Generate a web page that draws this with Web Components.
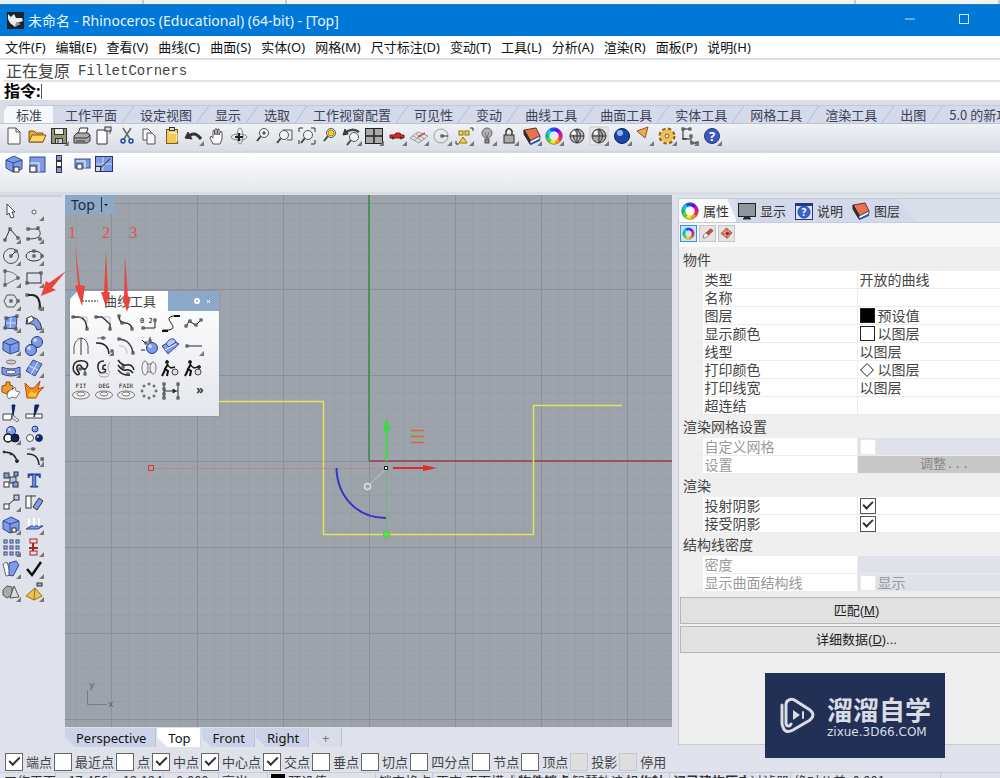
<!DOCTYPE html>
<html lang="zh-CN">
<head>
<meta charset="utf-8">
<title>未命名 - Rhinoceros</title>
<style>
  body {
    margin: 0;
    height: 100vh;
    overflow: hidden;
    font: 13px/18px "Noto Sans", "Noto Sans CJK SC", sans-serif;
    color: #222;
    background: #dfe2eb;
    --line: #c3c8d3;
    --blue: #0078d7;
  }
</style>
</head>
<body>
<app-window>
  <title-bar slot="top">未命名 - Rhinoceros (Educational) (64-bit) - [Top]</title-bar>
  <menu-bar slot="top"></menu-bar>
  <command-line slot="top">正在复原</command-line>
  <toolbar-tabs slot="top"></toolbar-tabs>
  <tool-strip slot="top" kind="main"></tool-strip>
  <tool-strip slot="top" kind="extra"></tool-strip>
  <side-tools slot="left"></side-tools>
  <view-port slot="center"><curve-palette></curve-palette></view-port>
  <view-tabs slot="center"></view-tabs>
  <property-panel slot="right"></property-panel>
  <snap-bar slot="bottom"></snap-bar>
  <status-bar slot="bottom"></status-bar>
</app-window>

<script>
// ----- Icon drawing, every icon is centred on 0,0 in a 22x22 box -----
const ln = (d, c = '#333', w = 1) => `<path d="${d}" fill="none" stroke="${c}" stroke-width="${w}"/>`;
const sh = (d, f, c = '#333', w = 1) => `<path d="${d}" fill="${f}" stroke="${c}" stroke-width="${w}" stroke-linejoin="round"/>`;
const ci = (x, y, r, f = 'none', c = '#333', w = 1) => `<circle cx="${x}" cy="${y}" r="${r}" fill="${f}" stroke="${c}" stroke-width="${w}"/>`;
const el = (x, y, rx, ry, f = 'none', c = '#333') => `<ellipse cx="${x}" cy="${y}" rx="${rx}" ry="${ry}" fill="${f}" stroke="${c}"/>`;
const re = (x, y, w, h, f = 'none', c = '#333') => `<rect x="${x}" y="${y}" width="${w}" height="${h}" fill="${f}" stroke="${c}"/>`;
const nodes = (...p) => p.map(([x, y]) => re(x - 1, y - 1, 2, 2, '#fff')).join('');
const BLUE = '#7f9be6';
const PALE = '#b9c9f3';
const NAVY = '#12235c';

const lens = (x, y) => ln(`M${x - 3} ${y + 3}L${x - 7} ${y + 8}`, '#444', 2) + ci(x, y, 4.5, '#f1f3f7', '#555');
const box = sh('M-8-4L0-8 8-4 8 5-1 8-8 4Z', BLUE, '#334a94') + ln('M-8-4L-1-1 8-4M-1-1V8', '#334a94');
const ball = (x, y, r, f = BLUE) => ci(x, y, r, f, '#223c86') + `<circle cx="${x - r / 3}" cy="${y - r / 3}" r="${r / 3}" fill="#fff" opacity=".6"/>`;
const wheel = (r, w) => ['#e33', '#f90', '#fe0', '#5d2', '#0c8', '#0cf', '#05f', '#60f', '#d0c']
  .map((c, i) => {
    const a = i * 40 * Math.PI / 180, b = (i + 1.1) * 40 * Math.PI / 180;
    const p = t => `${(r * Math.cos(t)).toFixed(1)} ${(r * Math.sin(t)).toFixed(1)}`;
    return ln(`M${p(a)}A${r} ${r} 0 0 1 ${p(b)}`, c, w);
  }).join('') + ci(0, 0, r + w / 2, 'none', '#556', .7);
const layers = sh('M-8-6L4-8 8 0-2 5Z', '#e8714e', '#603028') + sh('M-8-6V-2L-2 8V4Z', '#333', '#222') + sh('M-2 5L8 0V3L-2 8Z', '#fff', '#446') + ln('M-2 8.500L8 4', '#2b53c0', 1.500);
const disc = word => `<text x="0" y="-3" text-anchor="middle" font-family="DejaVu Sans Mono" font-size="6" fill="#111">${word}</text>`
  + el(0, 4, 8.500, 4, '#eee', '#777') + el(0, 3, 4, 2, '#fff', '#777');
const worker = ci(-4, -6, 1.500, '#111') + ln('M-3-4L-6 1-3 3-4 8M-6 1L-7 4-9 8', '#111', 2) + ln('M-4-3L0 0 4-1', '#111', 1.500) + ci(4, 4, 3, '#ddd', '#444');

const ICONS = {
  page: sh('M-6-8H2L6-4V8H-6Z', '#fafafa', '#555') + ln('M2-8V-4H6', '#555'),
  open: sh('M-8 6V-5H-3L-1-3H6V6Z', '#e6a93a', '#80580f') + sh('M-8 6L-5-1H9L6 6Z', '#ffd56b', '#80580f'),
  save: re(-7.500, -7.500, 15, 15, '#96946a') + re(-4.500, -7.500, 9, 6, '#eee') + re(-3.500, 2.500, 7, 5, '#ccc') + ln('M-1 3V7'),
  print: sh('M-4-2L-2-8H6L4-2Z', '#fff') + sh('M-8 0L-5-3H6L8-1V5L5 7H-8Z', '#aaa') + ln('M-8 2H5L8-1M-6 5H3'),
  note: sh('M-7-6H3V8H-7Z', '#fff') + re(1, -9, 6, 4, '#ddd') + ln('M6-6V-2', '#555'),
  cut: ln('M-4-8L3 3M4-8L-3 3', '#666', 1.500) + ci(-4, 5, 2, 'none', '#24479b', 1.500) + ci(4, 5, 2, 'none', '#24479b', 1.500),
  copy: sh('M-6-7H-1L2-4V4H-6Z', '#fff', '#555') + sh('M-2-3H3L6 0V8H-2Z', '#f4f4f4', '#555'),
  paste: re(-5.500, -6.500, 11, 14, '#f3ca58', '#7b5a14') + re(-2.500, -8.500, 5, 3, '#ddd') + ln('M-3-3H5V5', '#fff'),
  undo: ln('M-6 1Q0-6 7 3', '#333', 3) + sh('M-9 2L-6-4-2 3Z', '#333'),
  hand: sh('M-4 8L-7 2-6 0-4 2V-5L-3-6-2-1V-7H0V-1L1-7H2V-1L4-5 5-4V3L3 8Z', '#fff', '#555'),
  rotate: el(0, 1, 8, 3, 'none', '#888') + el(1, 0, 3, 8, 'none', '#888') + ln('M-4 1H4M0-3V5', '#222', 2),
  zoomin: lens(2, -3) + ln('M0-3H4M2-5V-1'),
  zoomwin: ln('M-1-6H8V4H3', '#555') + lens(0, -1),
  zoomext: ln('M-8-4V-8H-4M4-8H8V-4M8 4V8H4M-8 4V8', '#333') + lens(1, -1),
  zoomsel: lens(2, -3) + ci(2, -3, 3, '#f4d42a', '#a88c00'),
  zoomback: ln('M-7-3Q0-9 7-4', '#444', 2.500) + sh('M-9-1L-7-7-4-2Z', '#444') + lens(2, 1),
  panes: re(-8.500, -7.500, 17, 15, '#aaa', '#222') + ln('M0-7V7M-8 0H8', '#222', 1.500),
  car: sh('M-7 2V-1L-3-1-1-3H3L4-1H7V2Z', '#d12a20', '#8d1914') + ci(-4, 2, 1, '#333') + ci(4, 2, 1, '#333'),
  mesh: ln('M-9 2L-1-4 9 0 0 7ZM-6 0L3 5M-3-2L6 3M-4 4L4-2', '#999') + ln('M-1 1L6-3', '#c55', 1.500),
  radius: ci(-1, 0, 7, 'none', '#999') + ln('M-1 0H6', '#333') + nodes([0, 0]),
  select: re(-5, -5, 4, 4, '#f5d64a', '#927400') + re(1, -5, 4, 4, '#f5d64a', '#927400') + sh('M-1 1L3 7H-5Z', '#f5d64a', '#927400') + ln('M6-8H9V-5M-8 5V8H-5'),
  bulb: ci(0, -3, 5, '#b3b3b3', '#666') + re(-2, 3, 4, 4, '#888', '#555') + ln('M-2-4L0 2 2-4', '#777'),
  lock: ln('M-3-1V-5Q0-10 3-5V-1', '#333', 1.500) + re(-5, -1, 10, 8, '#aaa'),
  layers,
  wheel: wheel(6.500, 3.500),
  globe: ci(0, 0, 7, '#bbb') + ln('M0-7V7M-7 0H7M0-7Q7 0 0 7M0-7Q-7 0 0 7') + ci(-3, -3, 2, '#fff', 'none'),
  globe2: re(-9, -9, 18, 18, '#e8e8e8', '#ccc') + ci(0, 0, 7, '#aaa') + ln('M0-7V7M-7 0H7M0-7Q7 0 0 7') + ci(-3, -3, 2, '#fff', 'none'),
  blueball: ci(0, 0, 7.500, '#1746ad', '#0c2158') + ci(-2, -3, 3, '#91b6fa', 'none'),
  cone: sh('M-7-5L4-9 1 2Z', '#efac46', '#80562a'),
  gear: `<circle r="6.500" fill="none" stroke="#916217" stroke-width="4" stroke-dasharray="3 2.100"/>` + ci(0, 0, 4.500, 'none', '#f3bf4d', 4) + ci(0, 0, 2, '#eee', '#815510'),
  dims: ln('M-7-7H1M-6-6V3H1M2 0V7H8M-7 3H-2', '#222') + nodes([-6, -7], [1, -7], [2, 0], [3, 7], [8, 7]),
  help: ci(0, 0, 7.500, '#3b59c1', '#26367f') + `<text y="5" text-anchor="middle" font-family="Noto Sans" font-size="13" font-weight="700" fill="#fff">?</text>`,

  cube: box + re(0, 3, 5, 5, '#fff'),
  resize: re(-7, -7, 15, 15, BLUE, '#334a94') + re(-7, 2, 6, 6, '#fff') + ln('M-7-1H2V8', '#fff'),
  stack: re(-2.500, -8.500, 5, 5, BLUE) + re(-2.500, -2.500, 5, 5, '#fff') + re(-2.500, 3.500, 5, 5, BLUE),
  wide: re(-7, -5, 15, 9, BLUE, '#334a94') + re(-5, 0, 5, 5, '#fff') + ln('M-6-3H3V4', '#fff'),
  scale: re(-8.500, -7.500, 17, 15, BLUE, '#22357a') + ln('M-8 0H8M-1-7V7', '#c7d3f8') + ln('M-6 6L6-5', '#222') + re(-8.500, 2.500, 5, 5, '#cfdafb'),

  arrow: sh('M-4-7L4 1H1L3 6 0 7-2 2-4 4Z', '#fff', '#444'),
  point: ci(0, 1, 2, '#fff', '#555'),
  polyline: ln('M-6 6L-1-5 7 4') + nodes([-6, 6], [-1, -5], [7, 4]),
  freecurve: ln('M-6-5H2Q7-5 6 1 5 5-6 5', '#444') + nodes([-6, -5], [4, -6], [6, 5], [-6, 5]),
  circle: ci(0, 0, 7.500, 'none', '#555') + ln('M0 0L5-5') + nodes([0, 0], [5, -5]),
  ellipse: el(0, 0, 8, 5) + nodes([0, 0], [0, -5], [8, 0]),
  arc: ln('M-6-7Q5-6 7 0L-6 7Z', '#777') + nodes([-6, -7], [7, 0], [-6, 7]),
  rect: re(-7, -5, 14, 10) + nodes([-7, 5], [7, -5]),
  hexagon: ln('M-7 0L-4-6H3L7 0 3 6H-4Z', '#555') + nodes([0, 0], [7, 0]),
  fillet: ln('M-7-6H-2Q6-6 6 7', '#222', 2) + nodes([-7, -6], [6, 7]),
  surface: sh('M-5-5L6-7 5 6-6 5Z', BLUE, '#334a94') + ln('M0-6L-1 5M-5 0H5', '#d6e0fc') + nodes([-5, -5], [6, -7], [5, 6], [-6, 5]),
  sweep: sh('M-7-5Q5-9 8 6L3 7Q1-1-8 1Z', BLUE, '#334') + sh('M-7-5L-2-7 0-3-6 1Z', '#fff', '#444'),
  solid: box,
  spheres: ball(3, -4, 5.500) + ball(-3, 4, 5.500),
  tube: el(0, -6, 5, 2, '#ccc', '#777') + sh('M-9-1Q0 3 9-1V6Q0 10-9 6Z', BLUE, '#334a94') + el(0, 4, 5, 2, '#eef', '#556'),
  plane: sh('M-8 3L-1-8 8-4 1 8Z', BLUE, '#334a94') + ln('M-5-2L4 2M4-6L-3 6', '#dbe4ff'),
  puzzle: sh('M-9-4L-5-5-5-8-1-8-1-5 2-4 1 1-3 1-4 4-9 2Z', '#f39d27', '#855510') + sh('M-3 2L1-1 1 0 4-3 5 1 9 2 5 8 1 7-2 9-4 6Z', '#fff', '#777'),
  burst: sh('M-9-7L-4-2 0-2 6-9 4-1 10-3 5 2 2 8H-7Z', '#f58a20', '#b64d0d') + sh('M-6 4L-2 0 0 3 4 1 2 7H-6Z', '#f8cd36', '#e09120'),
  trim: sh('M-8 1H1L0 7H-8Z', '#fff', '#444') + sh('M1-8H4L2 3Z', NAVY, NAVY) + sh('M2 2L8 7 6 9 1 5Z', '#ddd', '#777'),
  split: re(-8, 1, 16, 4, '#fff', '#444') + sh('M1-8H5L0 4Z', NAVY, NAVY),
  union: ball(0, -4, 4.500) + ci(-3, 3, 4, '#fff', '#111', 1.500) + ci(4, 3, 4, NAVY, '#111'),
  spots: ball(1, -6, 3) + ci(-4, 3, 3.500, '#fff', '#555') + ball(5, 3, 3.500, NAVY),
  join: ln('M-7-5Q5-5 6 6', '#222', 1.500) + ci(-7, -5, 1, '#222') + ci(0, -3, 1, '#222') + ci(6, 4, 1.500, '#222'),
  match: ln('M-7-3Q4-4 5 8', '#222', 1.500) + ln('M-7-8H2M9 0V7', '#888') + nodes([-1, -8], [8, 2]),
  blocks: re(-7, -7, 5, 5, BLUE) + re(-1, -3, 6, 6, PALE) + re(-7, 2, 5, 5, '#fff') + re(2, 2, 5, 5, BLUE) + re(3, -8, 4, 4, BLUE),
  text: `<text y="7" text-anchor="middle" font-family="Liberation Serif" font-size="19" font-weight="700" fill="#7796e2" stroke="#24479b">T</text>`,
  move: re(-7, 2, 5, 5, '#fff') + re(3, -7, 5, 5, PALE) + ln('M-2 2L3-2'),
  turn: re(-8, -6, 5, 12, '#fff') + sh('M-1 5L5-4 9-1 3 8Z', BLUE) + ln('M-3-6L2-6'),
  corner: box + re(1, 3, 4, 4, '#fff'),
  project: sh('M-8 4H4L9 1H-3Z', BLUE, '#334a94') + ln('M-5 1V-6M0 1V-7M5 1V-6', '#fff', 2),
  array: [-7, -1, 5].map(y => [-7, -1, 5].map(x => re(x, y, 3, 3, y ? PALE : '#fff', '#33457c')).join('')).join(''),
  weld: re(-4, -8, 7, 4, 'none', '#a22') + re(-4, 4, 7, 4, 'none', '#a22') + ln('M-1-4V4M-5 1H4', '#a22', 2),
  solids: sh('M-8-5L-4-7 0 6-5 7Z', '#fff', '#667') + sh('M-2-6L5-8 8-4 2 7-2 6Z', BLUE, '#334a94'),
  check: ln('M-7 0L-2 6 7-7', '#111', 2.500),
  group: sh('M-8-2L-4-6 1-5 1 3-4 6-8 3Z', '#aaa', '#555') + sh('M3-6L8 5-1 6Z', '#ddd', '#555'),
  pyramid: sh('M1-4L8 4 0 8-8 4Z', '#ecc44f', '#947018') + ln('M1-4L0 8', '#947018') + re(3, -9, 5, 3, '#aaa'),

  cornerfillet: ln('M-8-6H-3Q5-6 6 6', '#333', 1.500) + ln('M-2-6H6V0', '#bbb') + nodes([-8, -6], [6, 6]),
  chamfer: ln('M-8-6H-2L6 1V6', '#333', 1.500) + ln('M0-6H6V0', '#bbb') + nodes([-8, -6], [6, 6]),
  blend: ln('M-7-7Q-7 0-1 0T6 6', '#333', 1.500) + nodes([-7, -7], [6, 6], [-4, 0]),
  adjust: ln('M-7 5H6V-3', '#222') + nodes([-6, 5], [6, -3]) + `<text x="-9" y="0" font-size="7" font-family="DejaVu Sans Mono">0  2</text>`,
  snake: ln('M8-7H2Q-5-6 0 0T-2 7H-8', '#222') + ln('M3-7H9M-9 8H-3', '#111', 2),
  zigzag: ln('M-8 4L-5-2-2 0 2 2 7-3', '#222') + nodes([-8, 3], [-4, -2], [2, 2], [7, -3]),
  arch: ln('M-7 8V0Q-5-7 0-8 6-7 7 0V8', '#555') + ln('M0-8V9'),
  offset: ln('M-8-3Q4-4 5 8', '#222', 1.500) + ln('M-7-8H2', '#777') + nodes([-1, -8], [8, 5]),
  shell: ln('M-7-7Q5-6 7 7', '#444', 1.500) + ln('M-7 0Q1-1 1 8', '#bbb') + nodes([-7, -7], [7, 7]),
  orbit: ball(3, 2, 5.500) + ln('M-7-6L-4-3M1-9V-5M-8 4H-4', '#222') + nodes([-3, -3], [1, -5]),
  curl: sh('M-9 0L1-6 8-2-3 8Z', BLUE, '#334a94') + sh('M-5-2Q-2-8 3-7L5-4-2 1Z', PALE, '#334a94') + ln('M-6 4L5-2', '#fff'),
  dashline: ln('M-7 0H8', '#222') + nodes([-7, 0]),
  loop: ln('M-3 7C-10 4-9-6-2-7S8-5 6-1 1 0 0-2-5-3-4 1 0 5-3 7', '#222', 1.500) + ln('M0 1H4V5', '#222') + nodes([-1, 1], [4, 6]),
  spiral: ln('M0-7Q-7-7-6 0T1 4Q3 1-1 1-2-3 2-3', '#222', 1.500) + ln('M6-6Q2 0 6 5', '#aaa') + el(0, 7, 5, 2, 'none', '#aaa'),
  flow: ln('M-8-8Q-4-2 1-3T8 2M-8-3Q-4 3 0 2T7 5M-8 2Q-3 8 4 7', '#222', 1.500) + nodes([-3, -1], [2, 6]),
  rings: el(-4, 0, 3, 7, 'none', '#777') + el(4, 0, 3, 6, 'none', '#777') + ln('M-1-4H3M-1 4H3', '#777'),
  worker, worker2: worker + ci(5, -1, 1.500, '#222'),
  fit: disc('FIT'), deg: disc('DEG'), fair: disc('FAIR'),
  ring: [[0, -7], [5, -5], [7, 0], [5, 5], [0, 7], [-5, 5], [-7, 0], [-5, -5]].map(([x, y]) => ci(x, y, 1, '#fff', '#444')).join(''),
  connect: ln('M-7-7V7M7-7V7M-7 0H7', '#333') + sh('M2-2L5 0 2 2Z', '#222') + nodes([-7, -7], [-7, -2], [-7, 3], [-7, 7], [7, -7], [7, 7]),
  next: `<text x="6" y="3" text-anchor="middle" font-family="Noto Sans" font-size="12" font-weight="700" fill="#333">»</text>`,

  monitor: re(-8.500, -7.500, 17, 13, '#8e989c', '#222') + sh('M-2 6H2L4 8H-4Z', '#222'),
  helpbox: re(-8.500, -7.500, 17, 16, '#d8e3f8', '#26387d') + ln('M-8-6H8', '#26387d', 2) + ci(0, 1, 6, '#3b61cd', '#29499f')
    + `<text y="5" text-anchor="middle" font-family="Noto Sans" font-size="10" font-weight="700" fill="#fff">?</text>`,
  brush: sh('M-6 7Q-7 1-2-1L2 2Q-1 7-6 7Z', '#f5f5f5', '#555') + sh('M-2-1L5-7 8-4 2 2Z', '#d6492b', '#733'),
  material: sh('M0-8L8-1 1 7-8 0Z', '#df715b', '#7c2e23') + ln('M-5-3L4 4M4-5L-3 3M-1-5V4', '#f6d7ce') + ci(1, 0, 2, '#822', '#822')
};

// ----- Base class: clones the shared template of its subclass -----
class Piece extends HTMLElement {
  constructor() {
    super();
    this.attachShadow({ mode: 'open' });
  }
  connectedCallback() {
    const template = document.createElement('template');
    template.innerHTML = `<style>:host { display: block; box-sizing: border-box; }</style>` + this.render();
    this.shadowRoot.replaceChildren(template.content.cloneNode(true));
  }
}

const define = (name, render) => customElements.define(name, class extends Piece {
  render() { return render(this); }
});

// "name+" marks an icon that has a fly-out
const icons = list => list.split(' ').map(n => `<tool-icon name="${n.replace('+', '')}"${n.endsWith('+') ? ' more' : ''}></tool-icon>`).join('');

define('tool-icon', host => `
<style>
  :host { width: 22px; height: 22px; }
  button { display: block; width: 100%; height: 100%; padding: 0; border: 0; background: none; }
  svg { display: block; width: 100%; height: 100%; overflow: visible; }
</style>
<button type="button" aria-label="${host.getAttribute('name')}">
  <svg viewBox="-11 -11 22 22">${ICONS[host.getAttribute('name')]}
    ${host.hasAttribute('more') ? '<path d="M10 5V10H5Z" fill="#777"/>' : ''}</svg>
</button>`);

define('app-window', () => `
<style>
  :host { display: flex; flex-direction: column; height: 100%; overflow: hidden; }
  .behind { flex: none; display: flex; height: 4px; background: linear-gradient(90deg, #e8efef, #f4f6f5 40%, #f0f4f5); }
  .behind i { flex: 1; border-right: 2px solid #c5cccf; }
  .main { flex: 1; min-height: 0; display: grid; grid-template-columns: 65px 1fr 322px; column-gap: 0; position: relative; }
  .center { display: flex; flex-direction: column; min-height: 0; margin-right: 6px; padding-bottom: 4px; }
  .right { display: flex; flex-direction: column; padding: 3px 0 6px; }
  .marks { position: absolute; left: 0; top: 0; width: 300px; height: 160px; pointer-events: none; }
</style>
<div class="behind"><i></i><i></i><i style="flex: 4"></i><i></i></div>
<slot name="top"></slot>
<div class="main">
  <slot name="left"></slot>
  <div class="center"><slot name="center"></slot></div>
  <div class="right"><slot name="right"></slot></div>
  <svg class="marks" viewBox="0 0 300 160" fill="#e8453f">
    <path d="M75 48L80 90 85 91 82 111 75 91 78 90Z"/>
    <path d="M106 56L108 97 110 97 106 112 101 97 104 97Z"/>
    <path d="M125 61L128 102 131 102 127 117 122 102 124 101Z"/>
    <path d="M66 76L52 93 56 95 41 101 46 86 49 88Z"/>
    <g font-family="Liberation Serif" font-size="17" fill="#e8505a">
      <text x="68" y="43">1</text><text x="102" y="43">2</text><text x="129" y="43">3</text>
    </g>
  </svg>
</div>
<slot name="bottom"></slot>
<water-mark></water-mark>`);

define('title-bar', () => `
<style>
  :host { display: flex; align-items: center; flex: none; height: 32px; gap: 4px; padding-left: 7px; color: #e8f4ff; background: var(--blue); font-size: 14px; border-top: 1px solid #2a7ab8; }
  .name { flex: 1; }
  button { width: 50px; height: 31px; border: 0; padding: 0; background: none; }
</style>
<svg width="17" height="17" viewBox="0 0 17 17"><rect width="17" height="17" fill="#1c2227"/><path d="M1 2L4 5 7 2 9 6 15 6 16 9 10 11 8 15 3 11 1 7Z" fill="#e8eef0"/><path d="M9 10L14 12 8 15Z" fill="#8b969c"/></svg>
<span class="name"><slot></slot></span>
<button aria-label="min"><svg width="12" height="12"><path d="M1 6H11" stroke="#b9e0ff"/></svg></button>
<button aria-label="max"><svg width="12" height="12"><rect x="1.500" y="1.500" width="9" height="9" fill="none" stroke="#cfeaff"/></svg></button>
<span style="width: 7px"></span>`);

define('menu-bar', () => `
<style>
  :host { flex: none; height: 22px; background: #fff; }
  nav { display: flex; gap: 10px; padding: 2px 5px 0; white-space: nowrap; }
  a { color: #111; text-decoration: none; }
</style>
<nav>${'文件(F) 编辑(E) 查看(V) 曲线(C) 曲面(S) 实体(O) 网格(M) 尺寸标注(D) 变动(T) 工具(L) 分析(A) 渲染(R) 面板(P) 说明(H)'
    .split(' ').map(t => `<a href="#">${t}</a>`).join('')}</nav>`);

define('command-line', () => `
<style>
  :host { flex: none; padding: 1px 0 0 4px; border-top: 2px solid #dcdfe6; background: #fff; font-size: 16px; color: #444; }
  .past { display: flex; align-items: center; gap: 8px; height: 19px; padding-left: 2px; border-bottom: 2px solid #e2e2e6; }
  .past code { font: 14px "Liberation Mono", monospace; }
  label { display: flex; align-items: center; height: 18px; line-height: 16px; font-weight: 700; font-size: 16px; color: #000; }
  i { width: 1px; height: 15px; background: #555; }
  input { flex: 1; min-width: 0; height: 16px; padding: 0; border: 0; outline: 0; background: none; font: inherit; }
</style>
<div class="past"><slot></slot><code>FilletCorners</code></div>
<label>指令:<i></i><input type="text"></label>`);

define('toolbar-tabs', () => `
<style>
  :host { flex: none; height: 24px; padding: 5px 0 0 4px; overflow: hidden; border-bottom: 1px solid #bcc3d3; background: #dadde6; }
  div { display: flex; height: 19px; background: #d5daea; white-space: nowrap; color: #3c4152; }
  button { flex: none; position: relative; height: 19px; padding: 0 11px 0 12px; border: 0; border-top: 1px solid #c3c8d8; background: none; color: inherit; font: 13px/16px "Noto Sans CJK SC", sans-serif; }
  button::after { content: ""; position: absolute; right: 0; top: 0; width: 1px; height: 18px; background: #b6bdcf; transform: skewX(-35deg); }
  .on { background: #f7f8fb; clip-path: polygon(4px 0, 100% 0, 100% 100%, 0 100%, 0 6px); }
  .on::after { display: none; }
</style>
<div>${'标准 工作平面 设定视图 显示 选取 工作视窗配置 可见性 变动 曲线工具 曲面工具 实体工具 网格工具 渲染工具 出图 5.0_的新功能'
    .split(' ').map((t, i) => `<button class="${i ? '' : 'on'}">${t.replace('_', ' ')}</button>`).join('')}</div>`);

const STRIPS = {
  main: 'page open save+ print note cut copy paste undo+ hand rotate zoomin zoomwin zoomext zoomsel zoomback+ panes+ car+ mesh+ radius+ select+ bulb+ lock+ layers+ wheel+ globe globe2+ blueball+ cone+ gear+ dims+ help+',
  extra: 'cube resize stack wide scale'
};

define('tool-strip', host => `
<style>
  :host { flex: none; padding: 1px 3px 0; height: 29px; background: linear-gradient(#f1f2f6, #d9dde5); border-bottom: 2px solid #d2d6de; }
  :host([kind="extra"]) { height: 42px; padding-top: 0; background: linear-gradient(#fff, #e3e6ec); border-bottom: 3px solid #d8dce4; }
  div { display: grid; grid-template-columns: repeat(32, 1fr); width: 720px; justify-items: center; }
</style>
<div>${icons(STRIPS[host.getAttribute('kind')])}</div>`);

define('side-tools', () => `
<style>
  :host { border-top: 2px solid #cdd2dc; margin-right: 3px; padding-top: 3px; }
  div { display: grid; grid-template-columns: 23px 23px; grid-auto-rows: 1fr; height: 403px; align-items: center; }
</style>
<div>${icons('arrow point+ polyline+ freecurve+ circle+ ellipse+ arc+ rect+ hexagon+ fillet+ surface+ sweep+ solid+ spheres+ tube+ plane+ puzzle burst trim split union+ spots join match+ blocks text move+ turn corner+ project+ array+ weld+ solids+ check+ group+ pyramid+')}</div>`);

define('view-port', () => `
<style>
  :host { position: relative; flex: 1; min-height: 0; overflow: hidden; background: #9da3ab; }
  .scene { position: absolute; inset: 0; width: 100%; height: 100%; }
  .label { position: absolute; left: 0; top: 0; display: flex; align-items: center; height: 19px; padding-left: 6px; gap: 6px; border: 0; background: #8ea9c8; color: #1d2a3d; font: 14px/19px "Noto Sans", sans-serif; }
  .label i { width: 1px; height: 15px; background: #234; }
  .label b { width: 0; border: 2px solid transparent; border-top-color: #111; margin: 2px 1px 0 -4px; }
  slot { display: block; position: absolute; left: 5px; top: 96px; }
</style>
<svg class="scene">
  <defs>
    <pattern id="grid" x="46" y="8" width="86" height="86" patternUnits="userSpaceOnUse">
      <path d="M17.500 0V86M34.500 0V86M51.500 0V86M68.500 0V86M0 17.500H86M0 34.500H86M0 51.500H86M0 68.500H86" stroke="#989ea6"/>
      <path d="M.500 0V86M0 .500H86" stroke="#8a9099"/>
    </pattern>
  </defs>
  <rect width="100%" height="100%" fill="url(#grid)"/>
  <path d="M304 266H2000" stroke="#9c3c48" stroke-width="1.500"/>
  <path d="M304 0V266" stroke="#2f8f40" stroke-width="1.500"/>
  <path d="M154 206.500H258.500V339.500H468.500V210.500H557" fill="none" stroke="#e2e25c" stroke-width="1.500"/>
  <path d="M87 273.500H320" stroke="#c77d7d" stroke-dasharray="2 1"/>
  <path d="M321.500 274V340" stroke="#69bf69" stroke-dasharray="2 1"/>
  <path d="M305 289L320 275" stroke="#c4c8cc"/>
  <rect x="83.500" y="270.500" width="5" height="5" fill="none" stroke="#e33232"/>
  <path d="M271.500 273C272 300 291 323 321 323" fill="none" stroke="#3434c6" stroke-width="2"/>
  <path d="M328 273H361" stroke="#e02a2a" stroke-width="2"/>
  <path d="M358 270L372 273 358 276Z" fill="#e02a2a"/>
  <path d="M321.500 266V235" stroke="#35e035" stroke-width="2"/>
  <path d="M318 236L321.500 223 325 236Z" fill="#35e035"/>
  <path d="M346 235.500H359M346 241.500H359M346 247.500H359" stroke="#e0604f" stroke-width="1.500"/>
  <path d="M345 238.500H358M345 244.500H358" stroke="#7dc06c"/>
  <rect x="319.500" y="271.500" width="3" height="3" fill="#fff" stroke="#222"/>
  <circle cx="302.500" cy="291.500" r="3" fill="none" stroke="#dde0e3" stroke-width="1.500"/>
  <circle cx="321.500" cy="339.500" r="3" fill="#59e63f" stroke="#39d139"/>
  <path d="M22.500 495V509.500H42" fill="none" stroke="#767c85"/>
  <g font-family="Liberation Mono" font-size="9" fill="#555b63"><text x="24" y="493">y</text><text x="43" y="512">x</text></g>
</svg>
<button class="label">Top<i></i><b></b></button>
<slot></slot>`);

define('curve-palette', () => `
<style>
  :host { width: 149px; background: linear-gradient(#fff, #e3e6ec); box-shadow: 0 0 1px #667; }
  header { display: flex; height: 20px; background: #8ca8c8; color: #444; }
  h2 { display: flex; align-items: center; gap: 6px; width: 98px; box-sizing: border-box; margin: 0; padding-left: 12px; background: #fff; clip-path: polygon(8px 0, 100% 0, 100% 100%, 0 100%, 0 8px); font: 13px/20px "Noto Sans CJK SC", sans-serif; }
  span { flex: 1; display: flex; align-items: center; justify-content: flex-end; gap: 6px; padding-right: 8px; }
  div { display: grid; grid-template-columns: repeat(6, 1fr); grid-auto-rows: 1fr; height: 90px; padding: 1px 14px 14px 0; width: 135px; }
</style>
<header>
  <h2><svg width="16" height="4"><path d="M0 2H16" stroke="#222" stroke-dasharray="2 1"/></svg>曲线工具</h2>
  <span>
    <svg width="6" height="6"><circle cx="3" cy="3" r="2" fill="none" stroke="#fff" stroke-width="2"/></svg>
    <svg width="5" height="5"><path d="M1 1L4 4M4 1L1 4" stroke="#fff"/></svg>
  </span>
</header>
<div>${icons('cornerfillet chamfer blend adjust snake zigzag arch offset+ shell orbit curl dashline+ loop spiral flow rings worker worker2 fit deg fair ring connect next')}</div>`);

define('view-tabs', () => `
<style>
  :host { display: flex; flex: none; height: 20px; padding-top: 1px; gap: 1px; }
  button { height: 19px; padding: 0 9px 0 11px; border: 0; border-right: 1px solid #bac2da; background: #ccd3e8; color: #111; clip-path: polygon(0 0, 100% 0, 100% 100%, 10px 100%, 0 10px); font: 13px/18px "Noto Sans", sans-serif; }
  .on { background: #fff; }
  .add { width: 32px; background: #d9ddea; color: #777; padding: 0; }
</style>
<button>Perspective</button><button class="on">Top</button><button>Front</button><button>Right</button><button class="add">+</button>`);

const row = (label, value = '', cls = '') => `<tr class="${cls}"><td class="gut"></td><th>${label}</th><td>${value}</td></tr>`;
const head = text => `<tr class="head"><th colspan="3">${text}</th></tr>`;

define('property-panel', () => `
<style>
  :host { flex: 1; display: flex; flex-direction: column; background: #efefef; border: 1px solid #c5cad3; border-right: 0; color: #444; font-family: "Noto Sans CJK SC", sans-serif; }
  .tabs { display: flex; height: 23px; background: #d9deeb; border-bottom: 1px solid #c6ccdb; }
  .tabs button { display: flex; align-items: center; gap: 2px; width: 57px; padding: 0; border: 0; background: #d3d9ea; color: #333; font: 13px/20px "Noto Sans CJK SC", sans-serif; white-space: nowrap; }
  .tabs .on { background: #fafafb; clip-path: polygon(0 0, 48px 0, 57px 20px, 57px 100%, 0 100%); }
  .tabs button:last-child { width: 66px; clip-path: polygon(0 0, 48px 0, 100% 100%, 0 100%); }
  .tools { display: flex; gap: 2px; padding: 2px 1px 3px; height: 19px; background: #f8f8f8; border-bottom: 1px solid #eee; }
  .tools tool-icon { width: 17px; height: 17px; border: 1px solid #c6c6c6; background: #e4e4e4; }
  .tools tool-icon:first-child { border-color: #3c94d8; background: #cbe4f6; }
  table { width: 100%; border-collapse: collapse; table-layout: fixed; margin-left: 1px; font-size: 14px; line-height: 17px; }
  td, th { height: 17px; padding: 0 2px; border: 0; border-bottom: 1px solid #ececec; border-right: 1px solid #ececec; background: #fff; text-align: left; font-weight: 400; white-space: nowrap; }
  td.gut { background: #efefef; }
  .head th { height: 22px; padding: 0 3px; background: #efefef; border-color: #efefef; }
  .off th { color: #999; }
  .off td:last-child { background: #dfe2ea; color: #999; }
  label, .val { display: flex; align-items: center; gap: 3px; height: 17px; }
  .sw { width: 13px; height: 13px; border: 1px solid #222; box-sizing: content-box; }
  .dia { width: 8px; height: 8px; margin: 0 3px 0 2px; border: 1px solid #555; transform: rotate(45deg); }
  input { appearance: none; flex: none; box-sizing: border-box; width: 16px; height: 16px; margin: 0 -1px 0 0; border: 1px solid #555; background: #fff; display: grid; place-items: center; }
  input:disabled { border-color: #e6e8ec; }
  input:checked::after { content: ""; width: 8px; height: 4px; margin-bottom: 3px; border: solid #333; border-width: 0 0 2px 2px; transform: rotate(-45deg); }
  .off .adj { padding: 0; }
  .adj button { display: block; width: 100%; height: 17px; padding: 0 0 0 32px; border: 0; background: #c8c8c8; color: #888; font: 13px/17px "Liberation Mono", "Noto Sans CJK SC", monospace; }
  .wide { flex: none; height: 27px; margin: 0 0 2px 1px; padding: 0 0 0 32px; border: 1px solid #b5b5b5; border-right: 0; background: #e1e1e1; color: #222; font: 13px/24px "Liberation Sans", "Noto Sans CJK SC", sans-serif; }
  .first { margin-top: 5px; }
  footer { flex: none; height: 5px; margin: 19px auto 0; width: 14px; border-radius: 8px 8px 0 0; background: #e4e4e4; }
</style>
<div class="tabs">
  <button class="on"><tool-icon name="wheel"></tool-icon>属性</button>
  <button><tool-icon name="monitor"></tool-icon>显示</button>
  <button><tool-icon name="helpbox"></tool-icon>说明</button>
  <button><tool-icon name="layers"></tool-icon>图层</button>
</div>
<div class="tools"><tool-icon name="wheel"></tool-icon><tool-icon name="brush"></tool-icon><tool-icon name="material"></tool-icon></div>
<table>
  <colgroup><col style="width: 22px"><col style="width: 155px"><col></colgroup>
  ${head('物件')}
  ${row('类型', '开放的曲线')}
  ${row('名称')}
  ${row('图层', '<div class="val"><span class="sw" style="background: #000"></span>预设值</div>')}
  ${row('显示颜色', '<div class="val"><span class="sw"></span>以图层</div>')}
  ${row('线型', '以图层')}
  ${row('打印颜色', '<div class="val"><span class="dia"></span>以图层</div>')}
  ${row('打印线宽', '以图层')}
  ${row('超连结')}
  ${head('渲染网格设置')}
  ${row('自定义网格', '<label><input type="checkbox" aria-label="custom mesh" disabled></label>', 'off')}
  <tr class="off"><td class="gut"></td><th>设置</th><td class="adj"><button disabled>调整...</button></td></tr>
  ${head('渲染')}
  ${row('<label for="cast">投射阴影</label>', '<input id="cast" type="checkbox" checked>')}
  ${row('<label for="recv">接受阴影</label>', '<input id="recv" type="checkbox" checked>')}
  ${head('结构线密度')}
  ${row('密度', '', 'off')}
  ${row('显示曲面结构线', '<label><input type="checkbox" disabled>显示</label>', 'off')}
</table>
<button class="wide first">匹配(<u>M</u>)</button>
<button class="wide">详细数据(<u>D</u>)...</button>
<footer></footer>`);

define('snap-bar', () => `
<style>
  :host { display: flex; align-items: center; flex: none; height: 22px; padding-left: 5px; gap: 2px; white-space: nowrap; border-bottom: 1px solid #c9cdd6; color: #444; line-height: 16px; font-family: "Noto Sans CJK SC", sans-serif; }
  label { display: flex; align-items: center; gap: 3px; }
  input { appearance: none; box-sizing: border-box; width: 18px; height: 18px; margin: 0; border: 1px solid #666; background: #fff; display: grid; place-items: center; }
  input:disabled { border-color: #c8c8c8; background: #dedede; }
  input:checked::after { content: ""; width: 9px; height: 4px; margin-bottom: 4px; border: solid #333; border-width: 0 0 2px 2px; transform: rotate(-45deg); }
</style>
${'端点* 最近点 点 中点* 中心点* 交点* 垂点 切点 四分点 节点 顶点 投影- 停用-'.split(' ')
    .map(t => `<label><input type="checkbox"${t.endsWith('*') ? ' checked' : ''}${t.endsWith('-') ? ' disabled' : ''}>${t.replace(/[*-]/, '')}</label>`).join('')}`);

// Bottom bar runs past the lower edge of the window
const STATUS = [['工作平面', 55], ['x 17.456', 54], ['y 12.124', 54], ['z 0.000', 55], ['毫米', 49], ['<i></i>预设值', 108], ['锁定格点', 57], ['正交', 29],
  ['平面模式', 53], ['<b>物件锁点</b>', 54], ['智慧轨迹', 54], ['<b>操作轴</b>', 47], ['<b>记录建构历史</b>', 77], ['过滤器', 44], ['绝对公差: 0.001', 150]];

define('status-bar', () => `
<style>
  :host { display: flex; flex: none; height: 20px; margin-bottom: -15px; padding-left: 1px; white-space: nowrap; color: #333; line-height: 16px; font-family: "Noto Sans CJK SC", sans-serif; }
  span { flex: none; box-sizing: border-box; padding-left: 3px; overflow: hidden; border-right: 1px solid #c3c7cf; }
  i { display: inline-block; width: 14px; height: 14px; margin-right: 3px; background: #000; vertical-align: top; margin-top: 1px; }
</style>
${STATUS.map(([t, w]) => `<span style="width: ${w}px">${t}</span>`).join('')}`);

define('water-mark', () => `
<style>
  :host { position: fixed; right: 55px; bottom: 20px; display: flex; align-items: center; gap: 12px; width: 180px; height: 85px; padding-left: 15px; background: #233056; color: #d9dce5; }
  strong { display: block; font: 700 26px/32px "Noto Sans CJK SC", sans-serif; }
  small { display: block; font: 12px/14px "DejaVu Sans", sans-serif; }
</style>
<svg width="35" height="37" viewBox="0 0 35 37" fill="none" stroke="#d9dce5" stroke-width="3" stroke-linecap="round">
  <path d="M9 3Q6 4 6 8V26Q6 29 9 29 10 29 11 27M9 3Q12 1 16 4L30 13Q36 18 30 23L13 33Q5 37 3 30 2 28 2 26V8"/>
  <path d="M13 13L20 18 13 23Z" fill="#d9dce5" stroke="none"/><path d="M23 15V21" stroke-width="2"/>
</svg>
<div><strong>溜溜自学</strong><small>zixue.3D66.COM</small></div>`);
</script>
</body>
</html>
